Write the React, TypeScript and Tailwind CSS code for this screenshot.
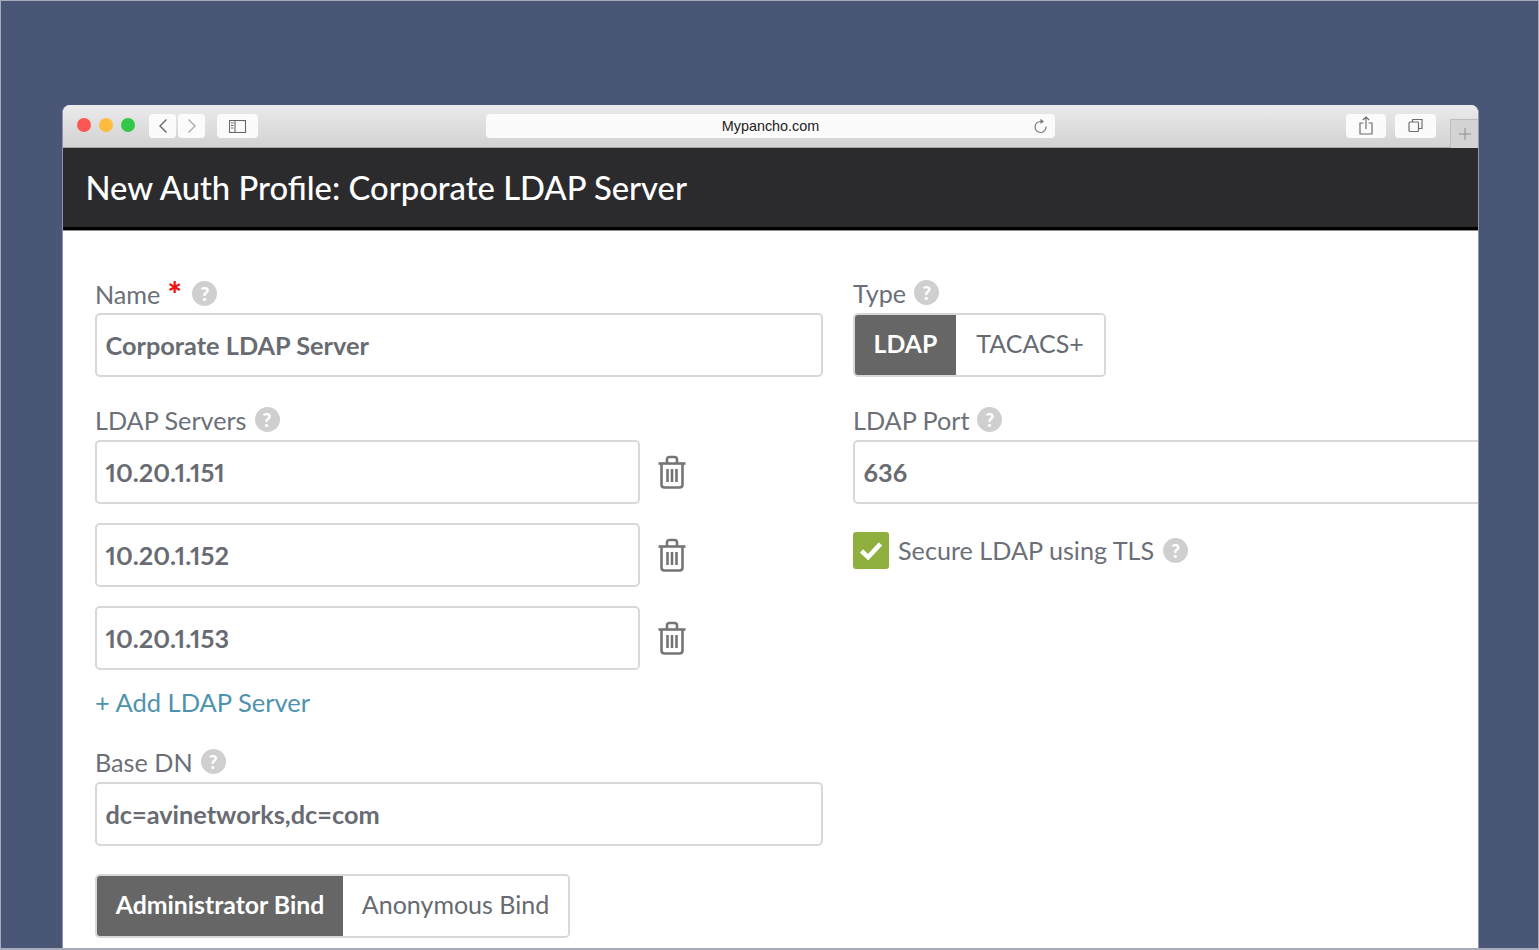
const LATO = "font-['Lato','Noto_Sans',sans-serif]";

function Help() {
  return (
    <span className="flex h-[25px] w-[25px] shrink-0 items-center justify-center rounded-full bg-[#cfcfcf] text-[19px] font-black leading-none text-white">
      ?
    </span>
  );
}

function Label({ text, required }: { text: string; required?: boolean }) {
  return (
    <div className={`flex h-[34px] items-start gap-2 text-[25.2px] leading-[26px] text-[#6b7078] ${required ? "pt-[2px]" : "pt-[1px]"}`}>
      <span>{text}</span>
      {required && <span className="-ml-[1px] -mt-[3px] w-[17px] text-[34px] font-black leading-[32px] text-[#f40f0f]">*</span>}
      <Help />
    </div>
  );
}

function Field({ value, className }: { value: string; className: string }) {
  return (
    <div className={`flex h-[64px] items-center rounded-[5px] border-2 border-[#d8d8d8] bg-white pl-[8.5px] pt-[2px] text-[25.3px] font-bold text-[#686c72] [font-variant-numeric:proportional-nums] ${className}`}>
      {value}
    </div>
  );
}

function Toggle({ on, off, onWidth, offWidth }: { on: string; off: string; onWidth: string; offWidth: string }) {
  return (
    <div className="flex h-[64px] w-fit overflow-hidden rounded-[5px] border-2 border-[#d8d8d8] text-[25px]">
      <div className={`flex items-center justify-center bg-[#666666] pb-[2px] text-[24.8px] font-bold text-white ${onWidth}`}>{on}</div>
      <div className={`flex items-center justify-center bg-white pb-[2px] text-[#666b72] ${offWidth}`}>{off}</div>
    </div>
  );
}

function Trash() {
  return (
    <svg width="30" height="34" viewBox="0 0 30 34" fill="none" stroke="#757575" strokeWidth="2.6">
      <path d="M1.500 8.500h27" />
      <path d="M10 8V4.500Q10 2 12.500 2h5Q20 2 20 4.500V8" />
      <path d="M4.500 9v20.500Q4.500 32.500 7.500 32.500h15q3 0 3-3V9" />
      <path d="M10.500 14v13M15 14v13M19.500 14v13" />
    </svg>
  );
}

function ServerRow({ value }: { value: string }) {
  return (
    <div className="flex items-center">
      <Field value={value} className="w-[545px]" />
      <div className="-mt-[1px] ml-[16.5px]">
        <Trash />
      </div>
    </div>
  );
}

function ToolButton({ children, className }: { children: React.ReactNode; className: string }) {
  return <div className={`flex h-[24px] items-center justify-center rounded-[4px] bg-[#fbfbfb] ${className}`}>{children}</div>;
}

function Toolbar() {
  return (
    <div className="flex h-[43px] shrink-0 items-start border-b border-[#a5a5a8] bg-gradient-to-b from-[#ebebeb] to-[#d2d2d2] pt-[9px]">
      <div className="ml-[14px] mt-[4px] flex gap-[8px]">
        <span className="h-[14px] w-[14px] rounded-full bg-[#fc5753]" />
        <span className="h-[14px] w-[14px] rounded-full bg-[#fdbc40]" />
        <span className="h-[14px] w-[14px] rounded-full bg-[#33c748]" />
      </div>
      <ToolButton className="ml-[14px] w-[27px]">
        <svg width="12" height="16" viewBox="0 0 12 16" fill="none" stroke="#666" strokeWidth="1.4"><path d="M9.500 1.500 3 8l6.500 6.500" /></svg>
      </ToolButton>
      <ToolButton className="ml-[2px] w-[27px]">
        <svg width="12" height="16" viewBox="0 0 12 16" fill="none" stroke="#aaa" strokeWidth="1.4"><path d="M2.500 1.500 9 8l-6.500 6.500" /></svg>
      </ToolButton>
      <ToolButton className="ml-[12px] w-[41px]">
        <svg width="18" height="13" viewBox="0 0 18 13" fill="none" stroke="#666" strokeWidth="1.1"><rect x="0.500" y="0.500" width="16" height="12" /><path d="M6 .5v12M2 3h2.500M2 5.500h2.500M2 8h2.500" /></svg>
      </ToolButton>
      <div className="relative ml-[228px] flex h-[24px] w-[569px] items-center justify-center rounded-[4px] bg-[#fbfbfb] pt-[2px] font-['Liberation_Sans',sans-serif] text-[14.4px] text-[#222]">
        Mypancho.com
        <svg className="absolute right-[7px] top-[4px]" width="15" height="16" viewBox="0 0 15 16" fill="none" stroke="#777" strokeWidth="1.2">
          <path d="M8 3.500A5.500 5.500 0 1 0 13 8.500" />
          <path d="M7.500 .8 11 3.500 7.500 6z" fill="#777" stroke="none" />
        </svg>
      </div>
      <ToolButton className="ml-[291px] w-[40px]">
        <svg className="-mt-[2px]" width="14" height="19" viewBox="0 0 14 19" fill="none" stroke="#6e6e6e" strokeWidth="1.2"><path d="M4.500 7H1v11h12V7H9.500M7 13V1M3.800 4 7 1l3.200 3" /></svg>
      </ToolButton>
      <ToolButton className="ml-[9px] w-[41px]">
        <svg className="-mt-[1px]" width="15" height="15" viewBox="0 0 15 15" fill="none" stroke="#6e6e6e" strokeWidth="1.2"><rect x="1" y="4" width="9.500" height="9.500" rx="1" /><path d="M4.500 4V1.500h9.500V10.500H10.500" /></svg>
      </ToolButton>
      <div className="ml-[14px] mt-[5px] flex h-[29px] flex-1 items-center justify-center border-l border-t border-[#bcbcbc] bg-[#d3d3d3]">
        <svg width="14" height="14" viewBox="0 0 14 14" stroke="#8e8e8e" strokeWidth="1"><path d="M7 1v12M1 7h12" /></svg>
      </div>
    </div>
  );
}

export default function App() {
  return (
    <div className={`h-[950px] w-[1539px] overflow-hidden border border-b-2 border-[#a7acbd] bg-[#4a5675] pl-[61px] pt-[104px] ${LATO}`}>
      <div className="flex h-[843px] w-[1417px] flex-col overflow-hidden rounded-t-[8px] border-x border-[#8f96ad] bg-white">
        <Toolbar />
        <div className="flex h-[82px] shrink-0 items-center border-b-[3px] border-black bg-[#2b2b2d] pl-[22.5px] text-[32.8px] font-medium text-white">
          New Auth Profile: Corporate LDAP Server
        </div>
        <div className="grid grid-cols-[728px_728px] gap-x-[30px] border-t border-[#8e8e8e] pl-[32px] pt-[48px]">
          <div className="flex flex-col">
            <Label text="Name" required />
            <Field value="Corporate LDAP Server" className="w-full" />
            <div className="mt-[29px]">
              <Label text="LDAP Servers" />
            </div>
            <div className="flex flex-col gap-[19px]">
              <ServerRow value="10.20.1.151" />
              <ServerRow value="10.20.1.152" />
              <ServerRow value="10.20.1.153" />
            </div>
            <div className="mt-[16px] h-[33px] text-[25.500px] leading-[33px] text-[#4e93ad]">+ Add LDAP Server</div>
            <div className="mt-[29px]">
              <Label text="Base DN" />
            </div>
            <Field value="dc=avinetworks,dc=com" className="w-full" />
            <div className="mt-[28px]">
              <Toggle on="Administrator Bind" off="Anonymous Bind" onWidth="w-[246px]" offWidth="w-[225px]" />
            </div>
          </div>
          <div className="flex flex-col">
            <Label text="Type" />
            <Toggle on="LDAP" off="TACACS+" onWidth="w-[101px]" offWidth="w-[148px]" />
            <div className="mt-[29px]">
              <Label text="LDAP Port" />
            </div>
            <Field value="636" className="w-full" />
            <div className="mt-[28px] flex items-center gap-[9px] text-[25.2px] text-[#6b7078]">
              <span className="flex h-[37px] w-[36px] items-center justify-center rounded-[3px] bg-[#8fb03e]">
                <svg width="24" height="19" viewBox="0 0 25 20" fill="none" stroke="white" strokeWidth="4.800"><path d="M2.500 10.500 9.500 17 22.500 3" /></svg>
              </span>
              <span>Secure LDAP using TLS</span>
              <Help />
            </div>
          </div>
        </div>
      </div>
    </div>
  );
}
